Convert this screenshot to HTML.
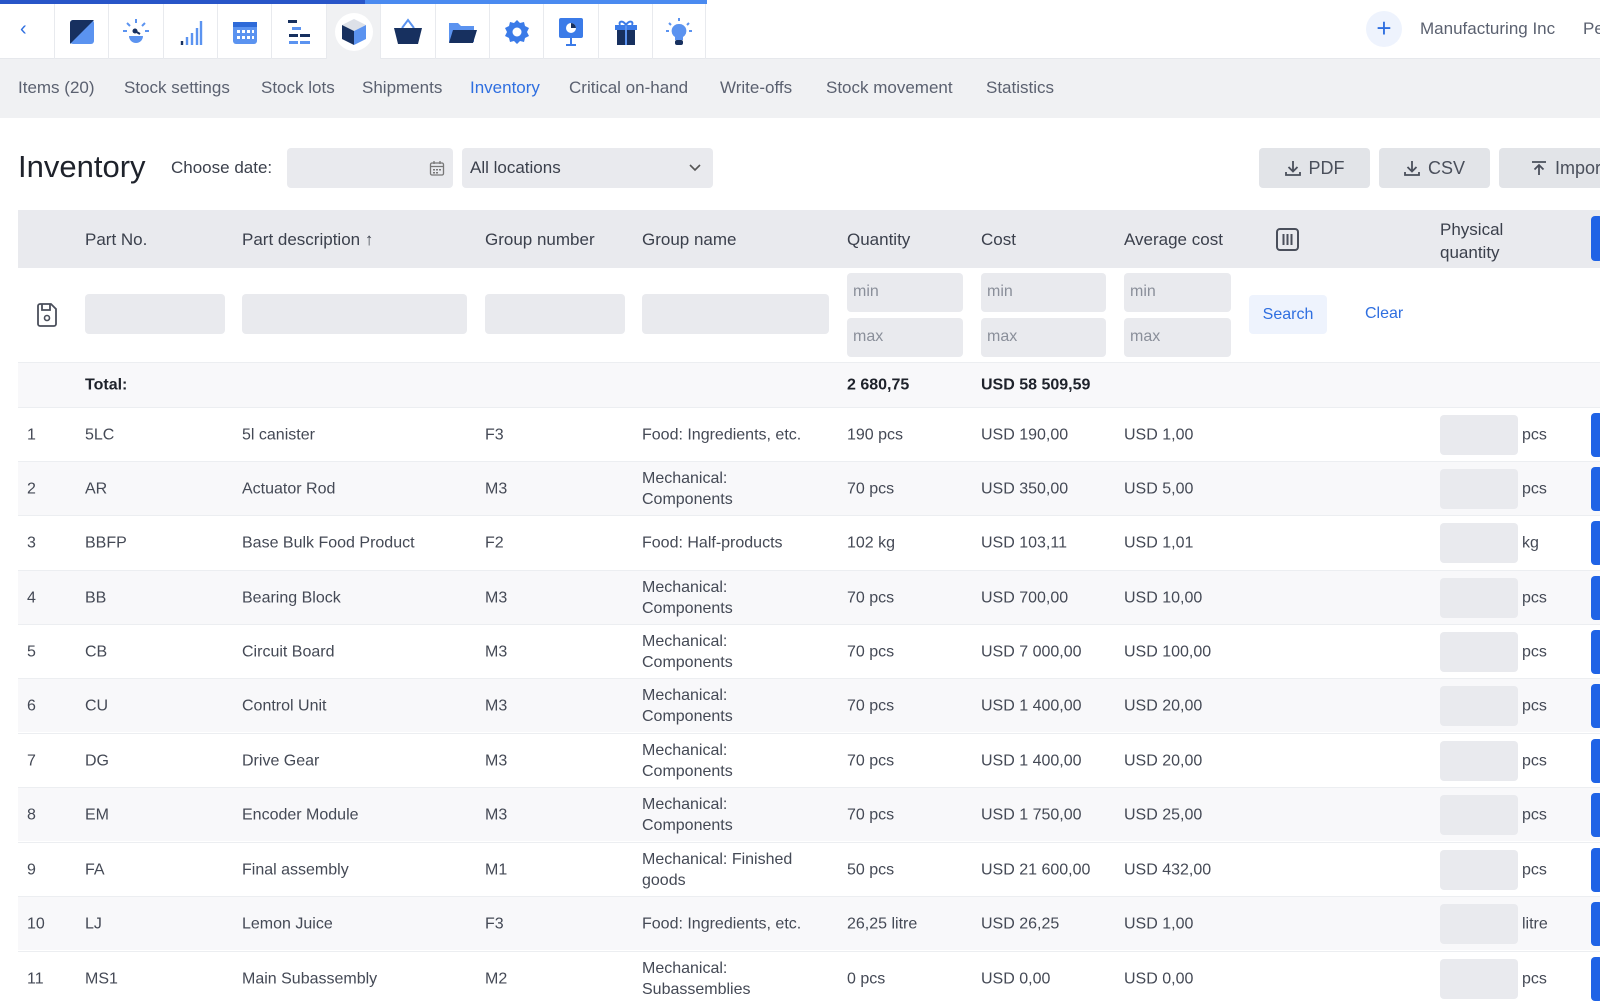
<!DOCTYPE html>
<html><head><meta charset="utf-8"><style>
*{box-sizing:border-box;margin:0;padding:0}
body{width:1600px;height:1000px;overflow:hidden;background:#fff;font-family:"Liberation Sans",sans-serif;color:#3b404c;font-size:16px;position:relative}
.a{position:absolute;white-space:nowrap}
.topbar{position:absolute;left:0;top:0;width:1600px;height:59px;background:#fff;border-bottom:1px solid #e6e8ec}
.strip1{position:absolute;left:0;top:0;width:365px;height:4px;background:#2855c8}
.strip2{position:absolute;left:365px;top:0;width:342px;height:4px;background:#4a8af0}
.cell{position:absolute;top:4px;width:54px;height:55px;border-left:1px solid #e8eaee;display:flex;align-items:center;justify-content:center}
.nav{position:absolute;left:0;top:59px;width:1600px;height:59px;background:#f0f1f3}
.nav span{position:absolute;top:19px;font-size:17px;color:#5b6170}
.inp{position:absolute;background:#e9eaee;border-radius:4px}
.btn{position:absolute;top:148px;height:40px;background:#e2e4e8;border-radius:4px;font-size:18px;color:#4a4f5b;display:flex;align-items:center;justify-content:center;gap:8px}
.th{position:absolute;top:210px;left:18px;width:1582px;height:58px;background:#e9eaee}
.row{position:absolute;left:18px;width:1582px;height:54px;border-top:1px solid #eceef1}
.row div{position:absolute;top:50%;transform:translateY(-50%);font-size:16px;line-height:21px;white-space:nowrap;color:#444955}
.g{background:#f8f8fa}
</style></head><body>
<div class="topbar">
<div class="strip1"></div><div class="strip2"></div>
<div class="a" style="left:20px;top:18px;color:#2f6fe0;font-size:20px">‹</div>
<div class="cell" style="left:54px"><svg width="26" height="26"><rect x="1" y="1" width="24" height="24" rx="3" fill="#5b93f0"/><path d="M1 25V4a3 3 0 013-3h21z" fill="#17305f"/></svg></div>
<div class="cell" style="left:108px"><svg width="30" height="30"><g stroke="#5b93f0" stroke-width="2"><path d="M15 2v4M6 6l3 3M24 6l-3 3M2 14h4M24 14h4"/></g><path d="M8 19h14a7 7 0 01-14 0z" fill="#5b93f0"/><circle cx="14" cy="14" r="2.5" fill="#17305f"/><path d="M14 14l5 3" stroke="#17305f" stroke-width="2"/></svg></div>
<div class="cell" style="left:163px"><svg width="24" height="28"><g stroke-width="2.4"><path d="M3 27v-4" stroke="#17305f"/><path d="M8 27v-8M13 27v-12M18 27v-17" stroke="#5b93f0"/><path d="M22 27V3" stroke="#5b93f0"/></g></svg></div>
<div class="cell" style="left:217px"><svg width="28" height="28"><rect x="2" y="4" width="24" height="22" rx="3" fill="#5b93f0"/><rect x="2" y="4" width="24" height="5" fill="#2e6ad8"/><g fill="#fff"><rect x="6" y="12" width="3" height="3"/><rect x="11" y="12" width="3" height="3"/><rect x="16" y="12" width="3" height="3"/><rect x="21" y="12" width="2" height="3"/><rect x="6" y="18" width="3" height="3"/><rect x="11" y="18" width="3" height="3"/><rect x="16" y="18" width="3" height="3"/><rect x="21" y="18" width="2" height="3"/></g></svg></div>
<div class="cell" style="left:271px"><svg width="26" height="28"><rect x="2" y="2" width="9" height="3" fill="#17305f"/><rect x="6" y="9" width="9" height="3" fill="#5b93f0"/><rect x="3" y="16" width="9" height="3" fill="#17305f"/><rect x="14" y="16" width="10" height="3" fill="#17305f"/><rect x="3" y="23" width="9" height="3" fill="#5b93f0"/><rect x="14" y="23" width="10" height="3" fill="#5b93f0"/></svg></div>
<div class="cell" style="left:326px;background:#f0f1f3"><div style="width:38px;height:38px;border-radius:50%;background:#fff;display:flex;align-items:center;justify-content:center"><svg width="26" height="28"><path d="M13 1l12 6-12 6-12-6z" fill="#dde1e8"/><path d="M1 7l12 6v14L1 21z" fill="#17305f"/><path d="M25 7l-12 6v14l12-6z" fill="#5b93f0"/></svg></div></div>
<div class="cell" style="left:380px"><svg width="30" height="28"><path d="M9 10l6-8 6 8" stroke="#5b93f0" stroke-width="2" fill="none"/><path d="M1 10h28l-4 16H5z" fill="#17305f"/></svg></div>
<div class="cell" style="left:435px"><svg width="30" height="24"><path d="M1 3h9l3 3h13v16H1z" fill="#5b93f0"/><path d="M5 10h24l-4 13H1z" fill="#17305f"/></svg></div>
<div class="cell" style="left:489px"><svg width="28" height="28"><path d="M14 2l3 3 4-1 1 4 4 2-2 4 2 4-4 2-1 4-4-1-3 3-3-3-4 1-1-4-4-2 2-4-2-4 4-2 1-4 4 1z" fill="#3b7be8"/><circle cx="14" cy="14" r="4.5" fill="#fff"/></svg></div>
<div class="cell" style="left:543px"><svg width="26" height="30"><rect x="1" y="1" width="24" height="20" rx="2" fill="#3b7be8"/><circle cx="13" cy="11" r="5" fill="#fff"/><path d="M13 6v5h5a5 5 0 00-5-5z" fill="#17305f"/><path d="M13 21v7M8 28h10" stroke="#3b7be8" stroke-width="2"/></svg></div>
<div class="cell" style="left:598px"><svg width="26" height="28"><rect x="2" y="7" width="22" height="5" fill="#3b7be8"/><rect x="4" y="12" width="18" height="15" fill="#17305f"/><path d="M13 7v20" stroke="#5b93f0" stroke-width="2"/><path d="M13 7c-3-5-8-4-6 0M13 7c3-5 8-4 6 0" stroke="#3b7be8" stroke-width="2" fill="none"/></svg></div>
<div class="cell" style="left:652px;border-right:1px solid #e8eaee"><svg width="28" height="30"><g stroke="#5b93f0" stroke-width="2"><path d="M14 1v3M4 6l2 2M24 6l-2 2M1 14h3M24 14h3"/></g><path d="M14 7a7 7 0 00-4 13v3h8v-3a7 7 0 00-4-13z" fill="#5b93f0"/><rect x="10" y="23" width="8" height="5" rx="2" fill="#17305f"/></svg></div>
<div style="position:absolute;left:1366px;top:11px;width:36px;height:36px;border-radius:50%;background:#eef3fd;color:#2f6fe0;font-size:26px;line-height:34px;text-align:center">+</div>
<div class="a" style="left:1420px;top:19px;font-size:17px;color:#5b6170">Manufacturing Inc</div>
<div class="a" style="left:1583px;top:19px;font-size:17px;color:#5b6170">Pe</div>
</div>
<div class="nav">
<span style="left:18px">Items (20)</span><span style="left:124px">Stock settings</span><span style="left:261px">Stock lots</span><span style="left:362px">Shipments</span><span style="left:470px;color:#2f6fe0">Inventory</span><span style="left:569px">Critical on-hand</span><span style="left:720px">Write-offs</span><span style="left:826px">Stock movement</span><span style="left:986px">Statistics</span>
</div>
<div class="a" style="left:18px;top:149px;font-size:31px;color:#1e222b">Inventory</div>
<div class="a" style="left:171px;top:158px;font-size:17px;color:#3b404c">Choose date:</div>
<div class="inp" style="left:287px;top:148px;width:166px;height:40px"><svg style="position:absolute;right:8px;top:12px" width="16" height="16"><rect x="1.5" y="3" width="13" height="12" rx="1.5" fill="none" stroke="#777" stroke-width="1.3"/><path d="M1.5 6.5h13M5 1v3M11 1v3" stroke="#777" stroke-width="1.3"/><g fill="#777"><rect x="4" y="9" width="2" height="1.5"/><rect x="7" y="9" width="2" height="1.5"/><rect x="10" y="9" width="2" height="1.5"/><rect x="4" y="12" width="2" height="1.5"/><rect x="7" y="12" width="2" height="1.5"/></g></svg></div>
<div class="inp" style="left:462px;top:148px;width:251px;height:40px"><span class="a" style="left:8px;top:10px;font-size:17px;color:#3b404c">All locations</span><svg style="position:absolute;right:12px;top:15px" width="12" height="9"><path d="M1 2l5 5 5-5" fill="none" stroke="#555" stroke-width="1.6"/></svg></div>
<div class="btn" style="left:1259px;width:111px"><svg width="16" height="16"><path d="M8 1v10M3.5 7L8 11.5 12.5 7M1 12v3h14v-3" fill="none" stroke="#4a4f5b" stroke-width="1.8"/></svg>PDF</div>
<div class="btn" style="left:1379px;width:111px"><svg width="16" height="16"><path d="M8 1v10M3.5 7L8 11.5 12.5 7M1 12v3h14v-3" fill="none" stroke="#4a4f5b" stroke-width="1.8"/></svg>CSV</div>
<div class="btn" style="left:1499px;width:130px;justify-content:flex-start;padding-left:32px"><svg width="16" height="16"><path d="M1 2h14M8 15V5M3.5 9.5L8 5l4.5 4.5" fill="none" stroke="#4a4f5b" stroke-width="1.8"/></svg>Import</div>
<div class="th"></div>
<div class="a" style="left:85px;top:230px;font-size:17px">Part No.</div>
<div class="a" style="left:242px;top:230px;font-size:17px">Part description ↑</div>
<div class="a" style="left:485px;top:230px;font-size:17px">Group number</div>
<div class="a" style="left:642px;top:230px;font-size:17px">Group name</div>
<div class="a" style="left:847px;top:230px;font-size:17px">Quantity</div>
<div class="a" style="left:981px;top:230px;font-size:17px">Cost</div>
<div class="a" style="left:1124px;top:230px;font-size:17px">Average cost</div>
<svg class="a" style="left:1276px;top:228px" width="23" height="23"><rect x="1" y="1" width="21" height="21" rx="3" fill="none" stroke="#4a4f5b" stroke-width="2"/><path d="M7.5 6v11M11.5 6v11M15.5 6v11" stroke="#4a4f5b" stroke-width="2"/></svg>
<div class="a" style="left:1440px;top:218px;font-size:17px;line-height:23px">Physical<br>quantity</div>
<div class="a" style="left:1591px;top:216px;width:12px;height:45px;background:#1f63e6;border-radius:4px"></div>
<svg class="a" style="left:36px;top:303px" width="22" height="24"><path d="M2 3a2 2 0 012-2h11l5 5v15a2 2 0 01-2 2H4a2 2 0 01-2-2z" fill="none" stroke="#4a4f5b" stroke-width="1.8"/><path d="M6 1v6h8V1" fill="none" stroke="#4a4f5b" stroke-width="1.8"/><circle cx="11" cy="15" r="2.5" fill="none" stroke="#4a4f5b" stroke-width="1.6"/></svg>
<div class="inp" style="left:85px;top:294px;width:140px;height:40px"></div>
<div class="inp" style="left:242px;top:294px;width:225px;height:40px"></div>
<div class="inp" style="left:485px;top:294px;width:140px;height:40px"></div>
<div class="inp" style="left:642px;top:294px;width:187px;height:40px"></div>
<div class="inp" style="left:847px;top:273px;width:116px;height:39px"><span class="a" style="left:6px;top:10px;color:#8a8f9a">min</span></div>
<div class="inp" style="left:847px;top:318px;width:116px;height:39px"><span class="a" style="left:6px;top:10px;color:#8a8f9a">max</span></div>
<div class="inp" style="left:981px;top:273px;width:125px;height:39px"><span class="a" style="left:6px;top:10px;color:#8a8f9a">min</span></div>
<div class="inp" style="left:981px;top:318px;width:125px;height:39px"><span class="a" style="left:6px;top:10px;color:#8a8f9a">max</span></div>
<div class="inp" style="left:1124px;top:273px;width:107px;height:39px"><span class="a" style="left:6px;top:10px;color:#8a8f9a">min</span></div>
<div class="inp" style="left:1124px;top:318px;width:107px;height:39px"><span class="a" style="left:6px;top:10px;color:#8a8f9a">max</span></div>
<div class="a" style="left:1249px;top:295px;width:78px;height:39px;background:#eef3fd;border-radius:4px;color:#2f6fe0;text-align:center;line-height:39px">Search</div>
<div class="a" style="left:1365px;top:305px;color:#2f6fe0">Clear</div>
<div class="row g" style="top:362px;height:45px"><div style="left:67px;font-weight:bold;color:#1e222b">Total:</div><div style="left:829px;font-weight:bold;color:#1e222b">2 680,75</div><div style="left:963px;font-weight:bold;color:#1e222b">USD 58 509,59</div></div>

<div class="row" style="top:407px"><div style="left:9px">1</div><div style="left:67px">5LC</div><div style="left:224px">5l canister</div><div style="left:467px">F3</div><div style="left:624px">Food: Ingredients, etc.</div><div style="left:829px">190 pcs</div><div style="left:963px">USD 190,00</div><div style="left:1106px">USD 1,00</div><div class="inp" style="left:1422px;width:78px;height:40px;position:absolute"></div><div style="left:1504px">pcs</div><div style="left:1573px;width:12px;height:44px;background:#1f63e6;border-radius:4px"></div></div>
<div class="row g" style="top:461px"><div style="left:9px">2</div><div style="left:67px">AR</div><div style="left:224px">Actuator Rod</div><div style="left:467px">M3</div><div style="left:624px">Mechanical:<br>Components</div><div style="left:829px">70 pcs</div><div style="left:963px">USD 350,00</div><div style="left:1106px">USD 5,00</div><div class="inp" style="left:1422px;width:78px;height:40px;position:absolute"></div><div style="left:1504px">pcs</div><div style="left:1573px;width:12px;height:44px;background:#1f63e6;border-radius:4px"></div></div>
<div class="row" style="top:515px"><div style="left:9px">3</div><div style="left:67px">BBFP</div><div style="left:224px">Base Bulk Food Product</div><div style="left:467px">F2</div><div style="left:624px">Food: Half-products</div><div style="left:829px">102 kg</div><div style="left:963px">USD 103,11</div><div style="left:1106px">USD 1,01</div><div class="inp" style="left:1422px;width:78px;height:40px;position:absolute"></div><div style="left:1504px">kg</div><div style="left:1573px;width:12px;height:44px;background:#1f63e6;border-radius:4px"></div></div>
<div class="row g" style="top:570px"><div style="left:9px">4</div><div style="left:67px">BB</div><div style="left:224px">Bearing Block</div><div style="left:467px">M3</div><div style="left:624px">Mechanical:<br>Components</div><div style="left:829px">70 pcs</div><div style="left:963px">USD 700,00</div><div style="left:1106px">USD 10,00</div><div class="inp" style="left:1422px;width:78px;height:40px;position:absolute"></div><div style="left:1504px">pcs</div><div style="left:1573px;width:12px;height:44px;background:#1f63e6;border-radius:4px"></div></div>
<div class="row" style="top:624px"><div style="left:9px">5</div><div style="left:67px">CB</div><div style="left:224px">Circuit Board</div><div style="left:467px">M3</div><div style="left:624px">Mechanical:<br>Components</div><div style="left:829px">70 pcs</div><div style="left:963px">USD 7 000,00</div><div style="left:1106px">USD 100,00</div><div class="inp" style="left:1422px;width:78px;height:40px;position:absolute"></div><div style="left:1504px">pcs</div><div style="left:1573px;width:12px;height:44px;background:#1f63e6;border-radius:4px"></div></div>
<div class="row g" style="top:678px"><div style="left:9px">6</div><div style="left:67px">CU</div><div style="left:224px">Control Unit</div><div style="left:467px">M3</div><div style="left:624px">Mechanical:<br>Components</div><div style="left:829px">70 pcs</div><div style="left:963px">USD 1 400,00</div><div style="left:1106px">USD 20,00</div><div class="inp" style="left:1422px;width:78px;height:40px;position:absolute"></div><div style="left:1504px">pcs</div><div style="left:1573px;width:12px;height:44px;background:#1f63e6;border-radius:4px"></div></div>
<div class="row" style="top:733px"><div style="left:9px">7</div><div style="left:67px">DG</div><div style="left:224px">Drive Gear</div><div style="left:467px">M3</div><div style="left:624px">Mechanical:<br>Components</div><div style="left:829px">70 pcs</div><div style="left:963px">USD 1 400,00</div><div style="left:1106px">USD 20,00</div><div class="inp" style="left:1422px;width:78px;height:40px;position:absolute"></div><div style="left:1504px">pcs</div><div style="left:1573px;width:12px;height:44px;background:#1f63e6;border-radius:4px"></div></div>
<div class="row g" style="top:787px"><div style="left:9px">8</div><div style="left:67px">EM</div><div style="left:224px">Encoder Module</div><div style="left:467px">M3</div><div style="left:624px">Mechanical:<br>Components</div><div style="left:829px">70 pcs</div><div style="left:963px">USD 1 750,00</div><div style="left:1106px">USD 25,00</div><div class="inp" style="left:1422px;width:78px;height:40px;position:absolute"></div><div style="left:1504px">pcs</div><div style="left:1573px;width:12px;height:44px;background:#1f63e6;border-radius:4px"></div></div>
<div class="row" style="top:842px"><div style="left:9px">9</div><div style="left:67px">FA</div><div style="left:224px">Final assembly</div><div style="left:467px">M1</div><div style="left:624px">Mechanical: Finished<br>goods</div><div style="left:829px">50 pcs</div><div style="left:963px">USD 21 600,00</div><div style="left:1106px">USD 432,00</div><div class="inp" style="left:1422px;width:78px;height:40px;position:absolute"></div><div style="left:1504px">pcs</div><div style="left:1573px;width:12px;height:44px;background:#1f63e6;border-radius:4px"></div></div>
<div class="row g" style="top:896px"><div style="left:9px">10</div><div style="left:67px">LJ</div><div style="left:224px">Lemon Juice</div><div style="left:467px">F3</div><div style="left:624px">Food: Ingredients, etc.</div><div style="left:829px">26,25 litre</div><div style="left:963px">USD 26,25</div><div style="left:1106px">USD 1,00</div><div class="inp" style="left:1422px;width:78px;height:40px;position:absolute"></div><div style="left:1504px">litre</div><div style="left:1573px;width:12px;height:44px;background:#1f63e6;border-radius:4px"></div></div>
<div class="row" style="top:951px"><div style="left:9px">11</div><div style="left:67px">MS1</div><div style="left:224px">Main Subassembly</div><div style="left:467px">M2</div><div style="left:624px">Mechanical:<br>Subassemblies</div><div style="left:829px">0 pcs</div><div style="left:963px">USD 0,00</div><div style="left:1106px">USD 0,00</div><div class="inp" style="left:1422px;width:78px;height:40px;position:absolute"></div><div style="left:1504px">pcs</div><div style="left:1573px;width:12px;height:44px;background:#1f63e6;border-radius:4px"></div></div>
</body></html>
